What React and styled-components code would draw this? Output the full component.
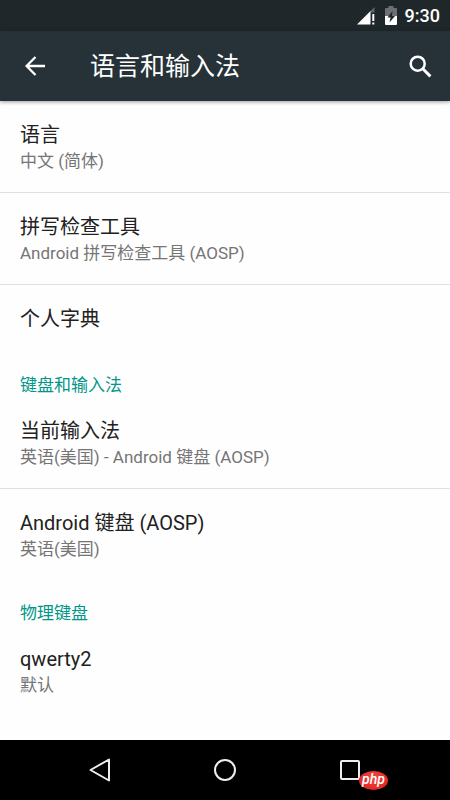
import React from 'react';
import styled, { createGlobalStyle } from 'styled-components';

const sections = [
  {
    items: [
      { title: '语言', summary: '中文 (简体)' },
      { title: '拼写检查工具', summary: 'Android 拼写检查工具 (AOSP)' },
      { title: '个人字典' },
    ],
  },
  {
    name: '键盘和输入法',
    items: [
      { title: '当前输入法', summary: '英语(美国) - Android 键盘 (AOSP)' },
      { title: 'Android 键盘 (AOSP)', summary: '英语(美国)' },
    ],
  },
  {
    name: '物理键盘',
    items: [{ title: 'qwerty2', summary: '默认' }],
  },
];

const SignalIcon = () => (
  <svg width="18" height="18" viewBox="0 0 18 18" aria-hidden="true">
    <path d="M17.500 0v5.500H13V4.500z" fill="#62676a" />
    <path d="M0 17.500L13.500 4v13.500z" fill="#fff" />
    <path d="M15.300 7h2v7h-2zM15.300 15.500h2v2h-2z" fill="#fff" />
  </svg>
);

const BatteryIcon = () => (
  <svg width="12" height="19" viewBox="0 0 12 19" aria-hidden="true">
    <path d="M3.500 0h5v2H11q1 0 1 1v7H0V3q0-1 1-1h2.500z" fill="#6c7072" />
    <path d="M0 10h12v8q0 1-1 1H1q-1 0-1-1z" fill="#fff" />
    <path d="M7.500 5L2.500 11.500H5.500L4.500 16.500l5.500-6.500H7z" fill="#20272a" />
  </svg>
);

const BackArrowIcon = () => (
  <svg width="20" height="20" viewBox="0 0 20 20" fill="none" stroke="#fff" strokeWidth="2.300" aria-hidden="true">
    <path d="M20 10H2M10.500 1L1.600 10l8.900 9" />
  </svg>
);

const SearchIcon = () => (
  <svg width="23" height="23" viewBox="0 0 23 23" fill="none" stroke="#fff" aria-hidden="true">
    <circle cx="8.700" cy="8.700" r="7" strokeWidth="2.500" />
    <path d="M13.800 13.800l7.600 7.600" strokeWidth="3" />
  </svg>
);

const NavBackIcon = () => (
  <svg width="24" height="24" viewBox="0 0 24 24" fill="none" stroke="#eee" strokeWidth="2" strokeLinejoin="round" aria-hidden="true">
    <path d="M21 1.500v21L2.500 12z" />
  </svg>
);

const NavHomeIcon = () => (
  <svg width="24" height="24" viewBox="0 0 24 24" fill="none" stroke="#eee" strokeWidth="2" aria-hidden="true">
    <circle cx="12" cy="12" r="10" />
  </svg>
);

const NavRecentIcon = () => (
  <svg width="24" height="24" viewBox="0 0 24 24" fill="none" stroke="#eee" strokeWidth="2" aria-hidden="true">
    <rect x="3" y="3" width="18" height="18" rx="1" />
  </svg>
);

const App = () => {
  return (
    <>
      <GlobalStyle />
      <Screen>
        <StatusBar>
          <StatusIcons>
            <SignalIcon />
            <BatteryIcon />
          </StatusIcons>
          <Clock>9:30</Clock>
        </StatusBar>
        <AppBar>
          <IconButton type="button" aria-label="返回">
            <BackArrowIcon />
          </IconButton>
          <AppTitle>语言和输入法</AppTitle>
          <IconButton type="button" aria-label="搜索">
            <SearchIcon />
          </IconButton>
        </AppBar>
        <Content>
          {sections.map((section, index) => (
            <section key={index}>
              {section.name && <SectionTitle>{section.name}</SectionTitle>}
              <List>
                {section.items.map((item) => (
                  <Item key={item.title}>
                    <Preference type="button">
                      <PreferenceTitle>{item.title}</PreferenceTitle>
                      {item.summary && <Summary>{item.summary}</Summary>}
                    </Preference>
                  </Item>
                ))}
              </List>
            </section>
          ))}
        </Content>
        <NavBar>
          <NavButton type="button" aria-label="后退">
            <NavBackIcon />
          </NavButton>
          <NavButton type="button" aria-label="主页">
            <NavHomeIcon />
          </NavButton>
          <NavButton type="button" aria-label="最近">
            <NavRecentIcon />
          </NavButton>
          <Badge>php</Badge>
        </NavBar>
      </Screen>
    </>
  );
};

const GlobalStyle = createGlobalStyle`
  * {
    box-sizing: border-box;
  }

  body {
    margin: 0;
    background: #fefefe;
    font-family: Roboto, "Noto Sans CJK SC", sans-serif;
  }

  button {
    border: 0;
    padding: 0;
    background: none;
    font: inherit;
    cursor: pointer;
  }
`;

const Screen = styled.div`
  min-height: 100vh;
  display: flex;
  flex-direction: column;
`;

const StatusBar = styled.div`
  height: 31px;
  padding: 0 10px;
  display: flex;
  align-items: center;
  justify-content: flex-end;
  gap: 8px;
  background: #20272a;
`;

const StatusIcons = styled.div`
  display: flex;
  align-items: center;
  gap: 10px;
`;

const Clock = styled.span`
  color: #fff;
  font-size: 18px;
  font-weight: 500;
  line-height: 24px;
`;

const AppBar = styled.header`
  height: 70px;
  padding: 0 10px;
  display: flex;
  align-items: center;
  background: #263238;
  box-shadow: 0 1px 4px rgba(0, 0, 0, 0.4);
`;

const IconButton = styled.button`
  width: 40px;
  height: 48px;
  margin: 0 5px;
  display: flex;
  align-items: center;
  justify-content: center;

  &:last-child {
    margin: 0;
  }
`;

const AppTitle = styled.h1`
  flex: 1;
  margin: 0 0 0 30px;
  padding-top: 2px;
  color: #fff;
  font-size: 25px;
  font-weight: 400;
  line-height: 36px;
`;

const Content = styled.main`
  flex: 1;
`;

const SectionTitle = styled.h2`
  margin: 0;
  padding: 21px 20px 0;
  color: #009688;
  font-size: 17px;
  font-weight: 400;
  line-height: 24px;
`;

const List = styled.ul`
  margin: 0;
  padding: 0;
  list-style: none;
`;

const Item = styled.li`
  & + & {
    border-top: 1px solid #e0e0e0;
  }
`;

const Preference = styled.button`
  width: 100%;
  padding: 20px 20px 19px;
  display: flex;
  flex-direction: column;
  text-align: left;
`;

const PreferenceTitle = styled.span`
  color: #212121;
  font-size: 20px;
  line-height: 28px;
`;

const Summary = styled.span`
  color: #757575;
  font-size: 17px;
  line-height: 24px;
`;

const NavBar = styled.nav`
  position: relative;
  height: 60px;
  padding: 0 37px;
  display: flex;
  background: #000;
`;

const NavButton = styled.button`
  flex: 1;
  display: flex;
  align-items: center;
  justify-content: center;
`;

const Badge = styled.span`
  position: absolute;
  right: 62px;
  bottom: 10px;
  width: 29px;
  height: 19px;
  border-radius: 50%;
  background: radial-gradient(ellipse at 50% 30%, #f4453f, #dc1d1d);
  color: #fff;
  font-size: 14px;
  font-style: italic;
  font-weight: 500;
  line-height: 16px;
  text-align: center;
`;

export default App;
